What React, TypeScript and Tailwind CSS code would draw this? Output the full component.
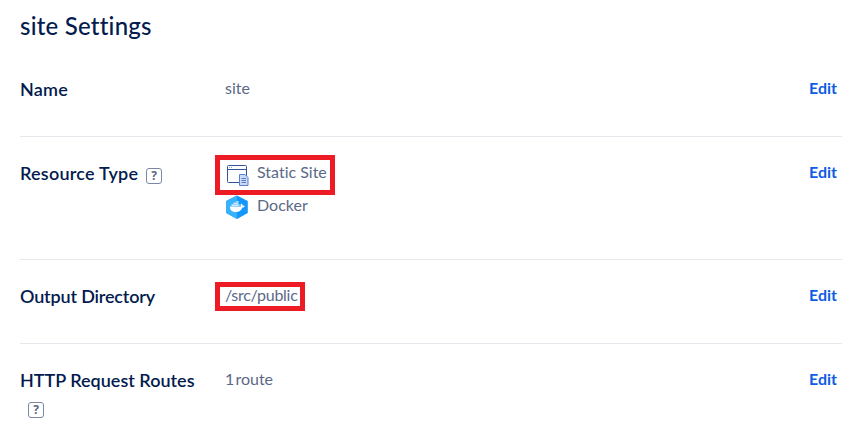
import type { ReactNode } from "react";

function Help({ className = "" }: { className?: string }) {
  return (
    <span
      className={`inline-flex h-4 w-4 shrink-0 items-center justify-center rounded-[3px] border border-[#7c86a5] pb-px font-['Open_Sans',sans-serif] text-[12px] leading-none font-bold tracking-normal text-[#5b6987] ${className}`}
    >
      ?
    </span>
  );
}

function SiteIcon() {
  return (
    <svg width="24" height="22" viewBox="0 0 24 22" fill="none">
      <rect x="2.5" y="1.5" width="19" height="17" rx="1" stroke="#31549b" />
      <path d="M3 5.5h18" stroke="#31549b" />
      <path d="M4 3.5h4" stroke="#8aa5d8" strokeDasharray="1 1" />
      <path d="M14.5 10.5h5.5l3 3v8h-8.500z" fill="#c9dafa" stroke="#5b7fc4" />
      <path d="M16.5 14.500h4.500M16.500 16.500h4.500M16.500 18.500h4.500" stroke="#5b7fc4" />
    </svg>
  );
}

function DockerIcon() {
  return (
    <svg width="24" height="24" viewBox="0 0 24 24">
      <path d="M12 0.500 22.800 6v12L12 24 1.200 18V6z" fill="#1298fb" />
      <path d="M12 0.500V24L1.200 18V6z" fill="#38b1ff" />
      <path d="M5 11.500h11c-.7-1-.5-2.200.2-3 1 .6 1.400 1.300 1.500 2.100.8-.2 1.500 0 2.100.4-.4 1-1.300 1.500-2.500 1.500-1.100 3-3.200 4.600-6.300 4.600-3.900 0-6-1.900-6-5.600z" fill="#fff" />
      <path d="M6.500 9.300h8v1.700h-8zM8.500 7.600h5v1.400h-5zM11.500 6h2v1.300h-2z" fill="#c5e7ff" />
    </svg>
  );
}

function Row({ label, height, children, last }: { label: ReactNode; height: string; children: ReactNode; last?: boolean }) {
  return (
    <div className={`flex ${height} ${last ? "" : "border-b border-[#e5e8ed]"}`}>
      <div className="w-[205px] shrink-0 pt-6 text-[18px] leading-6 font-semibold text-[#031b4e]">{label}</div>
      <div className="grow pt-[23px] text-[16px] leading-6 text-[#5b6987]">{children}</div>
      <a className="mr-[5px] pt-[23px] text-[16px] leading-6 font-bold text-[#0f5ce5]">Edit</a>
    </div>
  );
}

export default function App() {
  return (
    <main className="h-[431px] overflow-hidden bg-white pr-[18px] pl-5 font-['Lato',sans-serif] whitespace-nowrap [font-variant-ligatures:none]">
      <h1 className="h-[53px] pt-[10px] text-[24px] leading-8 font-medium tracking-[0.22px] text-[#031b4e]">site Settings</h1>
      <Row height="h-[84px]" label={<span className="tracking-[0.2px]">Name</span>}>site</Row>
      <Row
        height="h-[123px]"
        label={
          <div className="flex items-center">
            <span className="tracking-[0.23px]">Resource Type</span>
            <Help className="mt-[6px] ml-2" />
          </div>
        }
      >
        <div className="-mt-[5px] -ml-[10px] flex h-10 w-[120px] items-center border-[5px] border-[#ed1c24] pl-[5px]">
          <SiteIcon />
          <span className="-mt-[6px] ml-2">Static Site</span>
        </div>
        <div className="flex h-6 items-center">
          <DockerIcon />
          <span className="-mt-1 ml-2">Docker</span>
        </div>
      </Row>
      <Row height="h-[84px]" label={<span className="tracking-[-0.17px]">Output Directory</span>}>
        <div className="-mt-px -ml-[10px] flex h-[29px] w-[90px] items-center border-[5px] border-[#ed1c24] pl-[5px]">
          <span className="-mt-1 tracking-[-0.28px]">/src/public</span>
        </div>
      </Row>
      <Row
        height="h-[87px]"
        last
        label={
          <>
            <div>HTTP Request Routes</div>
            <div className="flex pt-[10px] pl-2"><Help /></div>
          </>
        }
      >
        <span className="tracking-[-1.5px]">1 </span>route
      </Row>
    </main>
  );
}
